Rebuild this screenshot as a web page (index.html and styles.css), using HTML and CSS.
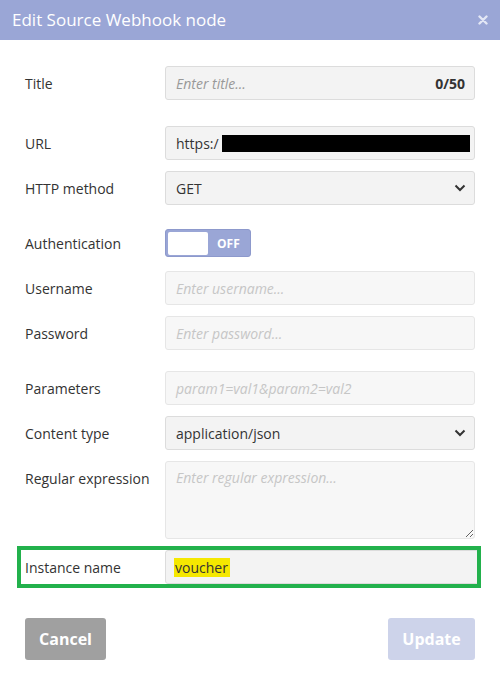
FILE: index.html
```html
<!DOCTYPE html>
<html>
<head>
<meta charset="utf-8">
<link rel="stylesheet" href="styles.css">
</head>
<body>
<div class="dialog">
  <div class="header">
    <span class="title">Edit Source Webhook node</span>
    <svg class="close" width="10" height="10" viewBox="0 0 10 10"><path d="M1.5 1.5 L8.5 8.5 M8.5 1.5 L1.5 8.5" stroke="#e3e7f5" stroke-width="2.4" stroke-linecap="round"/></svg>
  </div>
  <div class="content">
    <div class="row first">
      <label class="label">Title</label>
      <div class="field">
        <span class="ph">Enter title...</span>
        <span class="counter">0/50</span>
      </div>
    </div>
    <div class="row first">
      <label class="label">URL</label>
      <div class="field url">
        <span class="val">https:/</span><span class="redact"></span>
      </div>
    </div>
    <div class="row">
      <label class="label">HTTP method</label>
      <div class="field select">
        <span class="val">GET</span>
        <svg class="chev" width="12" height="8" viewBox="0 0 12 8"><path d="M1.5 1.5 L6 6 L10.5 1.5" fill="none" stroke="#333" stroke-width="2"/></svg>
      </div>
    </div>
    <div class="row group">
      <label class="label">Authentication</label>
      <div class="toggle">
        <span class="knob"></span>
        <span class="off">OFF</span>
      </div>
    </div>
    <div class="row">
      <label class="label">Username</label>
      <div class="field disabled"><span class="ph light">Enter username...</span></div>
    </div>
    <div class="row">
      <label class="label">Password</label>
      <div class="field disabled"><span class="ph light">Enter password...</span></div>
    </div>
    <div class="row group">
      <label class="label">Parameters</label>
      <div class="field disabled"><span class="ph light">param1=val1&amp;param2=val2</span></div>
    </div>
    <div class="row">
      <label class="label">Content type</label>
      <div class="field select">
        <span class="val">application/json</span>
        <svg class="chev" width="12" height="8" viewBox="0 0 12 8"><path d="M1.5 1.5 L6 6 L10.5 1.5" fill="none" stroke="#333" stroke-width="2"/></svg>
      </div>
    </div>
    <div class="row tall">
      <label class="label">Regular expression</label>
      <textarea class="area" disabled placeholder="Enter regular expression..."></textarea>
    </div>
    <div class="row highlight">
      <label class="label">Instance name</label>
      <div class="field"><span class="val mark">voucher</span></div>
    </div>
    <div class="actions">
      <button class="btn cancel">Cancel</button>
      <button class="btn update">Update</button>
    </div>
  </div>
</div>
</body>
</html>
```
FILE: styles.css
```css
html, body {
  margin: 0;
  padding: 0;
  background: #fff;
}
body {
  font-family: "Open Sans", "Liberation Sans", sans-serif;
  color: #333;
  width: 500px;
  height: 685px;
  overflow: hidden;
}
.dialog {
  width: 500px;
  height: 685px;
  background: #fff;
}
.header {
  height: 40px;
  background: #9aa6d6;
  display: flex;
  align-items: center;
  justify-content: space-between;
  padding: 0 12px 0 12px;
  box-sizing: border-box;
}
.title {
  color: #fff;
  font-size: 17px;
  line-height: 40px;
}
.close {
  display: block;
  flex: none;
}
.content {
  padding: 0 25px;
}
.row {
  display: flex;
  align-items: center;
  height: 34px;
  margin-top: 11px;
}
.row.first { margin-top: 26px; }
.row.group { margin-top: 21px; }
.row.tall { height: 78px; align-items: flex-start; }
.label {
  width: 140px;
  flex: none;
  font-size: 14px;
  color: #333;
}
.row.tall .label { padding-top: 8px; }
.field {
  flex: 1;
  min-width: 0;
  height: 34px;
  box-sizing: border-box;
  background: #f3f3f3;
  border: 1px solid #dcdcdc;
  border-radius: 3px;
  display: flex;
  align-items: center;
  padding: 0 10px;
  font-size: 14px;
  overflow: hidden;
}
.field.url { padding-right: 4px; }
.field.disabled {
  background: #f7f7f7;
  border-color: #e6e6e6;
}
.ph {
  color: #999;
  font-style: italic;
  flex: 1;
}
.ph.light { color: #c6c6c6; }
.counter {
  font-weight: bold;
  color: #333;
  font-size: 14px;
  margin-right: -1px;
}
.val { color: #333; white-space: nowrap; }
.redact {
  display: inline-block;
  flex: none;
  width: 248px;
  height: 17px;
  margin-left: 3px;
  background: #000;
}
.select { justify-content: space-between; padding-right: 8px; }
.chev { flex: none; }
.toggle {
  width: 86px;
  height: 28px;
  box-sizing: border-box;
  background: #9aa6d6;
  border: 1px solid #8d99cc;
  border-radius: 3px;
  display: flex;
  align-items: center;
  padding: 0 2px;
}
.knob {
  width: 40px;
  height: 23px;
  background: #fff;
  border-radius: 2px;
}
.off {
  color: #fff;
  font-weight: bold;
  font-size: 12px;
  margin-left: 9px;
}
.area {
  flex: 1;
  height: 78px;
  box-sizing: border-box;
  background: #f7f7f7;
  border: 1px solid #e6e6e6;
  border-radius: 3px;
  padding: 6px 10px;
  font-family: inherit;
  font-size: 14px;
  resize: vertical;
  margin: 0;
}
.area::placeholder {
  color: #c6c6c6;
  font-style: italic;
}
.row.highlight {
  margin-top: 11px;
  margin-left: -4px;
  margin-right: -2px;
  padding-left: 4px;
  outline: 4px solid #22b14c;
  outline-offset: 0;
  position: relative;
}
.row.highlight .field {
  margin-right: -2px;
}
.mark {
  background: #f5e800;
  padding: 0 2px 0 1px;
  margin-left: -2px;
}
.actions {
  display: flex;
  justify-content: space-between;
  margin-top: 34px;
}
.btn {
  height: 42px;
  border: none;
  border-radius: 3px;
  color: #fff;
  font-family: inherit;
  font-weight: bold;
  font-size: 16px;
  padding: 0;
}
.cancel {
  width: 81px;
  background: #a0a0a0;
}
.update {
  width: 87px;
  background: #cdd3ea;
}
```
